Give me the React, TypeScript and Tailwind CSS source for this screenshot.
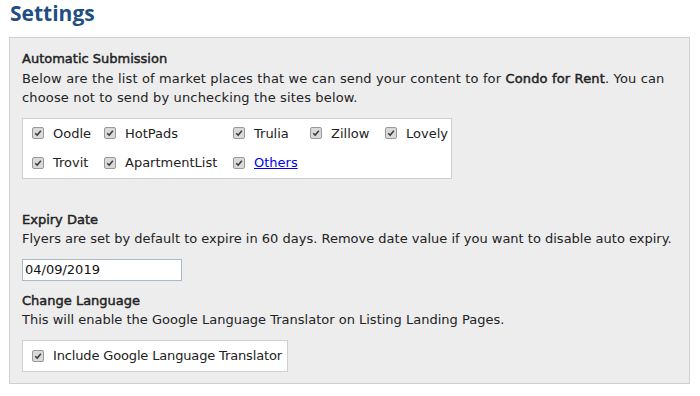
import React from 'react';

const Check = () => (
  <span className="inline-flex h-[12px] w-[12px] shrink-0 items-center justify-center rounded-[2px] border border-[#9a9a9a] bg-[#d9d9d9]">
    <svg viewBox="0 0 10 10" className="h-[8px] w-[8px]">
      <path d="M1.5 5.2 L4 7.6 L8.6 2.2" fill="none" stroke="#3a3a3a" strokeWidth="1.8" />
    </svg>
  </span>
);

const Site = ({ label, link }: { label: string; link?: boolean }) => (
  <div className="flex items-center gap-[9px]">
    <Check />
    {link ? <a href="#" className="text-[#0000ee] underline">{label}</a> : <span>{label}</span>}
  </div>
);

// headings in the shot are a light bold, about as wide as the body text
const strong = '[-webkit-text-stroke:0.45px_#222]';

export default function App() {
  return (
    <div className="h-[396px] w-[700px] bg-white px-[9px] text-[13px] leading-[19.5px] text-[#222] font-['DejaVu_Sans',sans-serif]">
      <h1 className="pl-[1px] font-['Open_Sans',sans-serif] text-[21px] font-bold leading-[26px] text-[#1f4f82]">Settings</h1>
      <div className="mt-[11px] h-[347px] w-[681px] border border-[#cfcfcf] bg-[#ededee] px-[12px] pt-[11px]">
        <div className={strong}>Automatic Submission</div>
        <p className="tracking-[0.15px]">
          Below are the list of market places that we can send your content to for <span className={strong}>Condo for Rent</span>. You can choose not to send by unchecking the sites below.
        </p>
        <div className="mt-[10px] grid h-[61px] w-[430px] grid-cols-[72px_129px_77px_75px_1fr] content-center gap-y-[10px] border border-[#cfcfcf] bg-white pl-[9px]">
          <Site label="Oodle" />
          <Site label="HotPads" />
          <Site label="Trulia" />
          <Site label="Zillow" />
          <Site label="Lovely" />
          <Site label="Trovit" />
          <Site label="ApartmentList" />
          <Site label="Others" link />
        </div>
        <div className={`mt-[31px] ${strong}`}>Expiry Date</div>
        <p>Flyers are set by default to expire in 60 days. Remove date value if you want to disable auto expiry.</p>
        <input
          readOnly
          value="04/09/2019"
          className="mt-[10px] block h-[22px] w-[160px] border border-[#a9b8c9] bg-white px-[2px] text-[13px] text-[#111] outline-none"
        />
        <div className={`mt-[10px] ${strong}`}>Change Language</div>
        <p>This will enable the Google Language Translator on Listing Landing Pages.</p>
        <div className="mt-[10px] flex h-[32px] w-[266px] items-center gap-[9px] whitespace-nowrap border border-[#cfcfcf] bg-white pl-[9px]">
          <Check />
          <span className="tracking-[-0.15px]">Include Google Language Translator</span>
        </div>
      </div>
    </div>
  );
}
